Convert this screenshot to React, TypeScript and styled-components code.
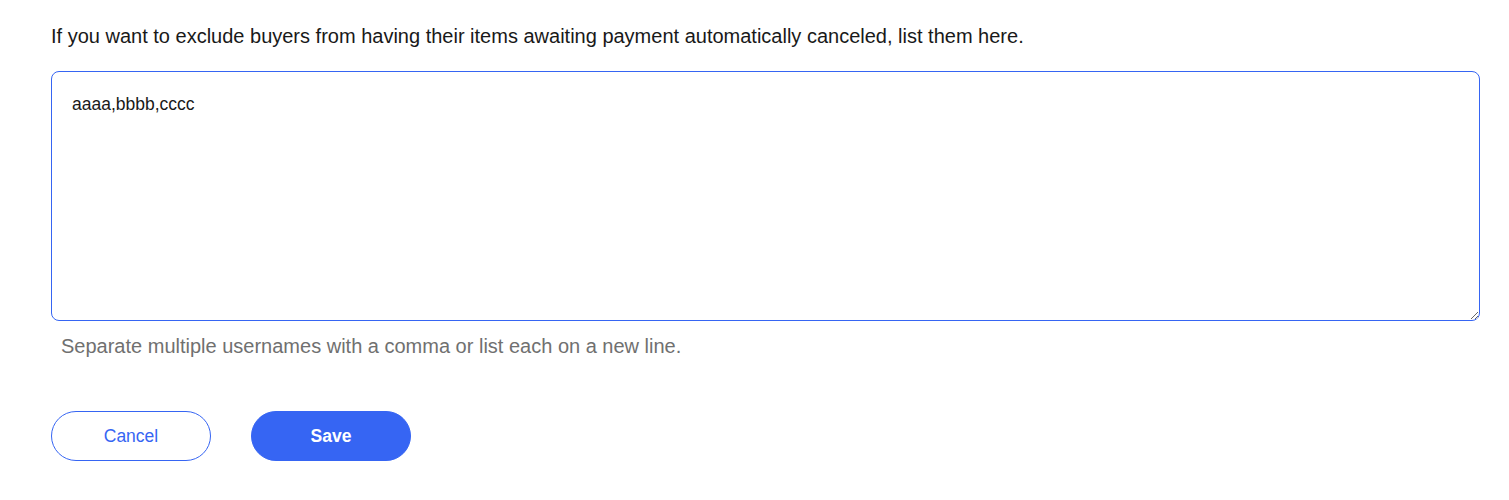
import React from "react";
import styled, { createGlobalStyle } from "styled-components";

const Global = createGlobalStyle`
  html, body { margin: 0; padding: 0; background: #fff; }
  body { font-family: "Liberation Sans", Arial, sans-serif; }
`;

const Page = styled.div`
  padding: 24px 29px 0 51px;
  display: flex;
  flex-direction: column;
`;

const Intro = styled.p`
  margin: 0 0 23px;
  font-size: 20px;
  line-height: 24px;
  color: #191919;
`;

const Field = styled.textarea`
  box-sizing: border-box;
  width: 100%;
  height: 250px;
  border: 1px solid #3665f3;
  border-radius: 8px;
  padding: 20px 20px;
  font-family: "Liberation Sans", Arial, sans-serif;
  font-size: 17.5px;
  line-height: 24px;
  color: #191919;
  caret-color: #000;
  outline: none;
  resize: vertical;
`;

const Helper = styled.div`
  margin: 11px 0 0 10px;
  font-size: 20px;
  line-height: 28px;
  color: #707070;
`;

const Actions = styled.div`
  display: flex;
  gap: 40px;
  margin-top: 51px;
`;

const Button = styled.button<{ $primary?: boolean }>`
  box-sizing: border-box;
  width: 160px;
  height: 50px;
  border-radius: 25px;
  border: 1px solid #3665f3;
  background: ${(p) => (p.$primary ? "#3665f3" : "#fff")};
  color: ${(p) => (p.$primary ? "#fff" : "#3665f3")};
  font-family: "Liberation Sans", Arial, sans-serif;
  font-size: 17.5px;
  font-weight: ${(p) => (p.$primary ? 700 : 400)};
  cursor: pointer;
`;

export default function App() {
  return (
    <Page>
      <Global />
      <Intro>
        If you want to exclude buyers from having their items awaiting payment automatically canceled, list them here.
      </Intro>
      <Field defaultValue="aaaa,bbbb,cccc" autoFocus />
      <Helper>Separate multiple usernames with a comma or list each on a new line.</Helper>
      <Actions>
        <Button>Cancel</Button>
        <Button $primary>Save</Button>
      </Actions>
    </Page>
  );
}
